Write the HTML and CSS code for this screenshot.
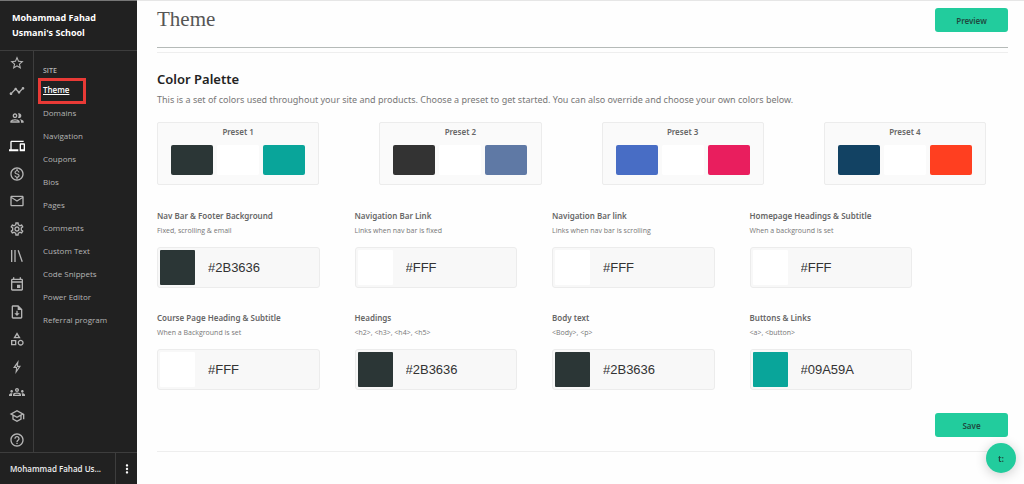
FILE: index.html
```html
<!DOCTYPE html>
<html lang="en">
<head>
    <meta charset="UTF-8">
    <meta name="viewport" content="width=device-width, initial-scale=1.0">
    <title>Theme</title>
    <link rel="stylesheet" href="styles.css">
</head>
<body>

    <!-- Sidebar -->
    <aside class="sidebar">
        <div class="school-name">Mohammad Fahad Usmani's School</div>

        <div class="sidebar-body">
            <nav class="rail" aria-label="Main">
                <div class="rail-main">
                    <a href="#"><svg viewBox="0 0 24 24"><path d="M22 9.24l-7.19-.62L12 2 9.19 8.63 2 9.24l5.46 4.73L5.82 21 12 17.27 18.18 21l-1.63-7.03L22 9.24zM12 15.4l-3.76 2.27 1-4.28-3.32-2.88 4.38-.38L12 6.1l1.71 4.04 4.38.38-3.32 2.88 1 4.28L12 15.4z"/></svg></a>
                    <a href="#"><svg viewBox="0 0 24 24"><path d="M23 8c0 1.1-.9 2-2 2-.18 0-.35-.02-.51-.07l-3.56 3.55c.05.16.07.34.07.52 0 1.1-.9 2-2 2s-2-.9-2-2c0-.18.02-.36.07-.52l-2.55-2.55c-.16.05-.34.07-.52.07s-.36-.02-.52-.07l-4.55 4.56c.05.16.07.33.07.51 0 1.1-.9 2-2 2s-2-.9-2-2 .9-2 2-2c.18 0 .35.02.51.07l4.56-4.55C8.02 9.36 8 9.18 8 9c0-1.1.9-2 2-2s2 .9 2 2c0 .18-.02.36-.07.52l2.55 2.55c.16-.05.34-.07.52-.07s.36.02.52.07l3.55-3.56C19.02 8.35 19 8.18 19 8c0-1.1.9-2 2-2s2 .9 2 2z"/></svg></a>
                    <a href="#"><svg viewBox="0 0 24 24"><path d="M9 13.75c-2.34 0-7 1.17-7 3.5V19h14v-1.75c0-2.33-4.66-3.5-7-3.5zM4.34 17c.84-.58 2.87-1.25 4.66-1.25s3.82.67 4.66 1.25H4.34zM9 12c1.93 0 3.5-1.57 3.5-3.5S10.93 5 9 5 5.5 6.57 5.5 8.5 7.07 12 9 12zm0-5c.83 0 1.5.67 1.5 1.5S9.83 10 9 10s-1.5-.67-1.5-1.5S8.17 7 9 7zm7.04 6.81c1.16.84 1.96 1.96 1.96 3.44V19h4v-1.75c0-2.02-3.5-3.17-5.96-3.44zM15 12c1.93 0 3.5-1.57 3.5-3.5S16.93 5 15 5c-.54 0-1.04.13-1.5.35.63.89 1 1.98 1 3.15s-.37 2.26-1 3.15c.46.22.96.35 1.5.35z"/></svg></a>
                    <a href="#" class="current"><svg viewBox="0 0 24 24"><path d="M4 6h18V4H4c-1.1 0-2 .9-2 2v11H0v3h14v-3H4V6zm19 2h-6c-.55 0-1 .45-1 1v10c0 .55.45 1 1 1h6c.55 0 1-.45 1-1V9c0-.55-.45-1-1-1zm-1 9h-4v-7h4v7z"/></svg></a>
                    <a href="#"><svg viewBox="0 0 24 24"><path d="M12 2C6.48 2 2 6.48 2 12s4.48 10 10 10 10-4.48 10-10S17.52 2 12 2zm0 18c-4.41 0-8-3.59-8-8s3.59-8 8-8 8 3.59 8 8-3.59 8-8 8zm.31-8.86c-1.77-.45-2.34-.94-2.34-1.67 0-.84.79-1.43 2.1-1.43 1.38 0 1.9.66 1.94 1.64h1.71c-.05-1.34-.87-2.57-2.49-2.97V5H10.9v1.69c-1.51.32-2.72 1.3-2.72 2.81 0 1.79 1.49 2.69 3.66 3.21 1.95.46 2.34 1.15 2.34 1.87 0 .53-.39 1.39-2.1 1.39-1.6 0-2.23-.72-2.32-1.64H8.04c.1 1.7 1.36 2.66 2.86 2.97V19h2.34v-1.67c1.52-.29 2.72-1.16 2.73-2.77-.01-2.2-1.9-2.96-3.66-3.42z"/></svg></a>
                    <a href="#"><svg viewBox="0 0 24 24"><path d="M22 6c0-1.1-.9-2-2-2H4c-1.1 0-2 .9-2 2v12c0 1.1.9 2 2 2h16c1.1 0 2-.9 2-2V6zm-2 0l-8 5-8-5h16zm0 12H4V8l8 5 8-5v10z"/></svg></a>
                    <a href="#"><svg viewBox="0 0 24 24"><path d="M19.43 12.98c.04-.32.07-.64.07-.98 0-.34-.03-.66-.07-.98l2.11-1.65c.19-.15.24-.42.12-.64l-2-3.46c-.09-.16-.26-.25-.44-.25-.06 0-.12.01-.17.03l-2.49 1c-.52-.4-1.08-.73-1.69-.98l-.38-2.65C14.46 2.18 14.25 2 14 2h-4c-.25 0-.46.18-.49.42l-.38 2.65c-.61.25-1.17.59-1.69.98l-2.49-1c-.06-.02-.12-.03-.18-.03-.17 0-.34.09-.43.25l-2 3.46c-.13.22-.07.49.12.64l2.11 1.65c-.04.32-.07.65-.07.98 0 .33.03.66.07.98l-2.11 1.65c-.19.15-.24.42-.12.64l2 3.46c.09.16.26.25.44.25.06 0 .12-.01.17-.03l2.49-1c.52.4 1.08.73 1.69.98l.38 2.65c.03.24.24.42.49.42h4c.25 0 .46-.18.49-.42l.38-2.65c.61-.25 1.17-.59 1.69-.98l2.49 1c.06.02.12.03.18.03.17 0 .34-.09.43-.25l2-3.46c.12-.22.07-.49-.12-.64l-2.11-1.65zm-1.98-1.71c.04.31.05.52.05.73 0 .21-.02.43-.05.73l-.14 1.13.89.7 1.08.84-.7 1.21-1.27-.51-1.04-.42-.9.68c-.43.32-.84.56-1.25.73l-1.06.43-.16 1.13-.2 1.35h-1.4l-.19-1.35-.16-1.13-1.06-.43c-.43-.18-.83-.41-1.23-.71l-.91-.7-1.06.43-1.27.51-.7-1.21 1.08-.84.89-.7-.14-1.13c-.03-.31-.05-.54-.05-.74s.02-.43.05-.73l.14-1.13-.89-.7-1.08-.84.7-1.21 1.27.51 1.04.42.9-.68c.43-.32.84-.56 1.25-.73l1.06-.43.16-1.13.2-1.35h1.39l.19 1.35.16 1.13 1.06.43c.43.18.83.41 1.23.71l.91.7 1.06-.43 1.27-.51.7 1.21-1.07.85-.89.7.14 1.13zM12 8c-2.21 0-4 1.79-4 4s1.79 4 4 4 4-1.79 4-4-1.79-4-4-4zm0 6c-1.1 0-2-.9-2-2s.9-2 2-2 2 .9 2 2-.9 2-2 2z"/></svg></a>
                    <a href="#"><svg viewBox="0 0 24 24"><path d="M3 3h2v18H3zM8 3h2v18H8zM12.8 3.6l1.9-.6 6.1 17.2-1.9.7z"/></svg></a>
                    <a href="#"><svg viewBox="0 0 24 24"><path d="M19 4h-1V2h-2v2H8V2H6v2H5c-1.11 0-1.99.9-1.99 2L3 20c0 1.1.89 2 2 2h14c1.1 0 2-.9 2-2V6c0-1.1-.9-2-2-2zm0 16H5V10h14v10zm0-12H5V6h14v2zm-7 5h5v5h-5z"/></svg></a>
                    <a href="#"><svg viewBox="0 0 24 24"><path d="M14 2H6c-1.1 0-2 .9-2 2v16c0 1.1.9 2 2 2h12c1.1 0 2-.9 2-2V8l-6-6zm4 18H6V4h7v5h5v11zM11 10h2v4h3l-4 4-4-4h3z"/></svg></a>
                    <a href="#"><svg viewBox="0 0 24 24"><path d="M12 2l-5.5 9h11L12 2zm0 3.84L13.93 9h-3.87L12 5.84zM17.5 13c-2.49 0-4.5 2.01-4.5 4.5s2.01 4.5 4.5 4.5 4.5-2.01 4.5-4.5-2.01-4.5-4.5-4.5zm0 7c-1.38 0-2.5-1.12-2.5-2.5s1.12-2.5 2.5-2.5 2.5 1.12 2.5 2.5-1.12 2.5-2.5 2.5zM3 21.5h8v-8H3v8zm2-6h4v4H5v-4z"/></svg></a>
                    <a href="#"><svg viewBox="0 0 24 24"><path fill-rule="evenodd" d="M14.5 1.5L6 13.5h4.5L9.5 22.5 18 10.2h-4.6zM12.3 8.2l-.7 3.7h3.1l-3 4.4.6-4.3H9.6z"/></svg></a>
                </div>
                <div class="rail-more">
                    <a href="#"><svg viewBox="0 0 24 24"><path d="M4 13c1.1 0 2-.9 2-2s-.9-2-2-2-2 .9-2 2 .9 2 2 2zm1.13 1.1C4.76 14.04 4.39 14 4 14c-.99 0-1.93.21-2.78.58C.48 14.9 0 15.62 0 16.43V18h4.5v-1.61c0-.83.23-1.61.63-2.29zM20 13c1.1 0 2-.9 2-2s-.9-2-2-2-2 .9-2 2 .9 2 2 2zm4 3.43c0-.81-.48-1.53-1.22-1.85-.85-.37-1.79-.58-2.78-.58-.39 0-.76.04-1.13.1.4.68.63 1.46.63 2.29V18H24v-1.57zm-7.76-2.78C15.07 13.13 13.63 12.75 12 12.75s-3.07.39-4.24.9C6.68 14.13 6 15.21 6 16.39V18h12v-1.61c0-1.18-.68-2.26-1.76-2.74zM8.07 16c.09-.23.13-.39.91-.69.97-.38 1.99-.56 3.02-.56s2.05.18 3.02.56c.77.3.81.46.91.69H8.07zM12 8c.55 0 1 .45 1 1s-.45 1-1 1-1-.45-1-1 .45-1 1-1m0-2c-1.66 0-3 1.34-3 3s1.34 3 3 3 3-1.34 3-3-1.34-3-3-3z"/></svg></a>
                    <a href="#"><svg viewBox="0 0 24 24"><path d="M12 3L1 9l4 2.18v6L12 21l7-3.82v-6l2-1.09V17h2V9L12 3zm6.82 6L12 12.72 5.18 9 12 5.28 18.82 9zM17 15.99l-5 2.73-5-2.73v-3.72L12 15l5-2.73v3.72z"/></svg></a>
                    <a href="#"><svg viewBox="0 0 24 24"><path d="M11 18h2v-2h-2v2zm1-16C6.48 2 2 6.48 2 12s4.48 10 10 10 10-4.48 10-10S17.52 2 12 2zm0 18c-4.41 0-8-3.59-8-8s3.59-8 8-8 8 3.59 8 8-3.59 8-8 8zm0-14c-2.21 0-4 1.79-4 4h2c0-1.1.9-2 2-2s2 .9 2 2c0 2-3 1.75-3 5h2c0-2.25 3-2.5 3-5 0-2.21-1.79-4-4-4z"/></svg></a>
                </div>
            </nav>

            <nav class="submenu" aria-label="Site">
                <div class="submenu-title">SITE</div>
                <a href="#" class="active">Theme</a>
                <a href="#">Domains</a>
                <a href="#">Navigation</a>
                <a href="#">Coupons</a>
                <a href="#">Bios</a>
                <a href="#">Pages</a>
                <a href="#">Comments</a>
                <a href="#">Custom Text</a>
                <a href="#">Code Snippets</a>
                <a href="#">Power Editor</a>
                <a href="#">Referral program</a>
            </nav>
        </div>

        <div class="account">
            <span class="account-name">Mohammad Fahad Us...</span>
            <button class="account-menu" aria-label="Account menu">
                <svg viewBox="0 0 24 24"><path d="M12 8c1.1 0 2-.9 2-2s-.9-2-2-2-2 .9-2 2 .9 2 2 2zm0 2c-1.1 0-2 .9-2 2s.9 2 2 2 2-.9 2-2-.9-2-2-2zm0 6c-1.1 0-2 .9-2 2s.9 2 2 2 2-.9 2-2-.9-2-2-2z"/></svg>
            </button>
        </div>
    </aside>

    <!-- Main Content -->
    <main class="content">
        <header class="page-header">
            <h1>Theme</h1>
            <button class="btn">Preview</button>
        </header>

        <section class="palette">
            <h2>Color Palette</h2>
            <p class="intro">This is a set of colors used throughout your site and products. Choose a preset to get started. You can also override and choose your own colors below.</p>

            <!-- Presets -->
            <div class="presets">
                <button class="preset">
                    <span class="preset-name">Preset 1</span>
                    <span class="preset-colors"><i class="slate"></i><i class="white"></i><i class="teal"></i></span>
                </button>
                <button class="preset">
                    <span class="preset-name">Preset 2</span>
                    <span class="preset-colors"><i class="charcoal"></i><i class="white"></i><i class="steel"></i></span>
                </button>
                <button class="preset">
                    <span class="preset-name">Preset 3</span>
                    <span class="preset-colors"><i class="blue"></i><i class="white"></i><i class="pink"></i></span>
                </button>
                <button class="preset">
                    <span class="preset-name">Preset 4</span>
                    <span class="preset-colors"><i class="navy"></i><i class="white"></i><i class="orange"></i></span>
                </button>
            </div>

            <!-- Custom colors -->
            <div class="fields">
                <div class="field">
                    <label for="nav-bg">Nav Bar &amp; Footer Background</label>
                    <small>Fixed, scrolling &amp; email</small>
                    <div class="color-box"><i class="slate"></i><input type="text" id="nav-bg" value="#2B3636"></div>
                </div>
                <div class="field">
                    <label for="nav-fixed">Navigation Bar Link</label>
                    <small>Links when nav bar is fixed</small>
                    <div class="color-box"><i class="white"></i><input type="text" id="nav-fixed" value="#FFF"></div>
                </div>
                <div class="field">
                    <label for="nav-scroll">Navigation Bar link</label>
                    <small>Links when nav bar is scrolling</small>
                    <div class="color-box"><i class="white"></i><input type="text" id="nav-scroll" value="#FFF"></div>
                </div>
                <div class="field">
                    <label for="home-heading">Homepage Headings &amp; Subtitle</label>
                    <small>When a background is set</small>
                    <div class="color-box"><i class="white"></i><input type="text" id="home-heading" value="#FFF"></div>
                </div>
                <div class="field">
                    <label for="course-heading">Course Page Heading &amp; Subtitle</label>
                    <small>When a Background is set</small>
                    <div class="color-box"><i class="white"></i><input type="text" id="course-heading" value="#FFF"></div>
                </div>
                <div class="field">
                    <label for="headings">Headings</label>
                    <small>&lt;h2&gt;, &lt;h3&gt;, &lt;h4&gt;, &lt;h5&gt;</small>
                    <div class="color-box"><i class="slate"></i><input type="text" id="headings" value="#2B3636"></div>
                </div>
                <div class="field">
                    <label for="body-text">Body text</label>
                    <small>&lt;Body&gt;, &lt;p&gt;</small>
                    <div class="color-box"><i class="slate"></i><input type="text" id="body-text" value="#2B3636"></div>
                </div>
                <div class="field">
                    <label for="buttons">Buttons &amp; Links</label>
                    <small>&lt;a&gt;, &lt;button&gt;</small>
                    <div class="color-box"><i class="teal"></i><input type="text" id="buttons" value="#09A59A"></div>
                </div>
            </div>

            <div class="actions">
                <button class="btn">Save</button>
            </div>
        </section>
    </main>

    <button class="chat" aria-label="Help">t:</button>

</body>
</html>
```

FILE: styles.css
```css
*,
*::after {
    box-sizing: border-box;
}

body {
    margin: 0;
    min-height: 100vh;
    display: flex;
    font-family: "Noto Sans", "Open Sans", sans-serif;
    font-size: 9px;
    color: #555;
    background-color: #fefefe;
}

button,
input {
    font-family: inherit;
    margin: 0;
    padding: 0;
    border: none;
}

button {
    cursor: pointer;
}

/* Sidebar */
.sidebar {
    width: 137px;
    flex-shrink: 0;
    display: flex;
    flex-direction: column;
    font-family: "Open Sans", "Noto Sans", sans-serif;
    font-size: 8px;
    background-color: #212121;
    border-top: 1px solid #777;
}

.school-name {
    padding: 9px 12px 10px;
    font-size: 9px;
    line-height: 15px;
    font-weight: 700;
    color: #fff;
    border-bottom: 1px solid #3d3d3d;
}

.sidebar-body {
    flex: 1;
    display: flex;
}

.rail {
    width: 34px;
    padding: 4px 0;
    display: flex;
    flex-direction: column;
    gap: 9px;
    border-right: 1px solid #3d3d3d;
}

.rail-main,
.rail-more {
    display: flex;
    flex-direction: column;
    align-items: center;
    gap: 8px;
}

.rail-main {
    flex: 1;
    justify-content: space-between;
}

.rail a,
.rail svg {
    display: block;
    width: 16px;
    height: 16px;
}

.rail svg {
    fill: #b5b5b5;
}

.rail .current svg {
    fill: #fff;
}

.submenu {
    flex: 1;
    padding: 13px 0 0 9px;
    display: flex;
    flex-direction: column;
    align-items: flex-start;
}

.submenu-title {
    font-size: 7px;
    line-height: 14px;
    font-weight: 600;
    color: #b5b5b5;
}

.submenu a {
    position: relative;
    line-height: 23px;
    color: #b5b5b5;
    text-decoration: none;
}

.submenu a.active {
    font-weight: 600;
    color: #fff;
    text-decoration: underline;
}

.submenu a.active::after {
    content: "";
    position: absolute;
    top: 0;
    left: -5px;
    width: 48px;
    height: 26px;
    border: 3px solid #e93a36;
}

.account {
    height: 32px;
    display: flex;
    align-items: stretch;
    border-top: 1px solid #3d3d3d;
}

.account-name {
    flex: 1;
    padding-left: 10px;
    line-height: 31px;
    font-weight: 600;
    color: #eee;
    white-space: nowrap;
}

.account-menu {
    width: 22px;
    background: none;
    border-left: 1px solid #3d3d3d;
}

.account-menu svg {
    display: block;
    width: 14px;
    height: 14px;
    margin: 0 auto;
    fill: #fff;
}

/* Main Content */
.content {
    flex: 1;
    min-width: 0;
    padding: 0 16px 0 20px;
    border-top: 1px solid #e6e6e6;
}

.page-header {
    height: 47px;
    padding-top: 7px;
    display: flex;
    justify-content: space-between;
    align-items: flex-start;
    border-bottom: 1px solid #b5bab8;
}

.page-header h1 {
    margin: 0;
    font-family: "Liberation Serif", serif;
    font-size: 21px;
    line-height: 22px;
    font-weight: 400;
    color: #555;
}

.btn {
    width: 73px;
    height: 24px;
    font-size: 8px;
    font-weight: 600;
    color: #1f4a40;
    background-color: #22cc9d;
    border-radius: 3px;
}

.palette {
    margin-top: 4px;
    padding-top: 17px;
    border-top: 1px solid #eee;
    border-bottom: 1px solid #eee;
}

.palette h2 {
    margin: 0;
    font-size: 13px;
    line-height: 18px;
    font-weight: 600;
    color: #222;
}

.intro {
    margin: 4px 0 14px;
    line-height: 16px;
    color: #777;
}

/* Presets */
.presets {
    display: grid;
    grid-template-columns: repeat(4, minmax(0, 1fr));
    gap: 60px;
    padding-right: 22px;
}

.preset {
    height: 63px;
    display: flex;
    flex-direction: column;
    align-items: center;
    gap: 6px;
    padding-top: 2px;
    background-color: #fafafa;
    border: 1px solid #ececec;
    border-radius: 2px;
}

.preset-name {
    font-size: 8px;
    line-height: 14px;
    font-weight: 600;
    color: #666;
}

.preset-colors {
    display: flex;
    gap: 4px;
}

.preset-colors i {
    width: 42px;
    height: 30px;
    border-radius: 2px;
}

/* Custom colors */
.fields {
    display: grid;
    grid-template-columns: repeat(4, minmax(0, 1fr));
    gap: 22px 35px;
    margin-top: 23px;
    padding-right: 96px;
}

.field label,
.field small {
    display: block;
    white-space: nowrap;
}

.field label {
    font-size: 8px;
    line-height: 16px;
    font-weight: 600;
    color: #666;
}

.field small {
    font-family: "Open Sans", "Noto Sans", sans-serif;
    font-size: 7px;
    line-height: 14px;
    color: #777;
}

.color-box {
    height: 41px;
    margin-top: 9px;
    padding: 2px;
    display: flex;
    align-items: center;
    gap: 13px;
    background-color: #f8f8f8;
    border: 1px solid #ececec;
    border-radius: 3px;
}

.color-box i {
    width: 35px;
    height: 35px;
    flex-shrink: 0;
    border-radius: 1px;
}

.color-box input {
    min-width: 0;
    flex: 1;
    font-family: "Liberation Sans", Arial, sans-serif;
    font-size: 13px;
    color: #333;
    background: none;
}

.actions {
    display: flex;
    justify-content: flex-end;
    padding: 23px 0 14px;
}

/* Swatches */
.slate { background-color: #2b3636; }
.white { background-color: #fff; }
.teal { background-color: #09a59a; }
.charcoal { background-color: #333; }
.steel { background-color: #5f79a5; }
.blue { background-color: #486dc5; }
.pink { background-color: #e91e5e; }
.navy { background-color: #124263; }
.orange { background-color: #ff3f20; }

/* Chat bubble */
.chat {
    position: fixed;
    right: 8px;
    bottom: 11px;
    width: 30px;
    height: 30px;
    font-size: 9px;
    font-weight: 600;
    color: #1f4a40;
    background-color: #22cc9d;
    border-radius: 50%;
    box-shadow: 0 2px 12px rgba(0, 0, 0, 0.2);
}
```
